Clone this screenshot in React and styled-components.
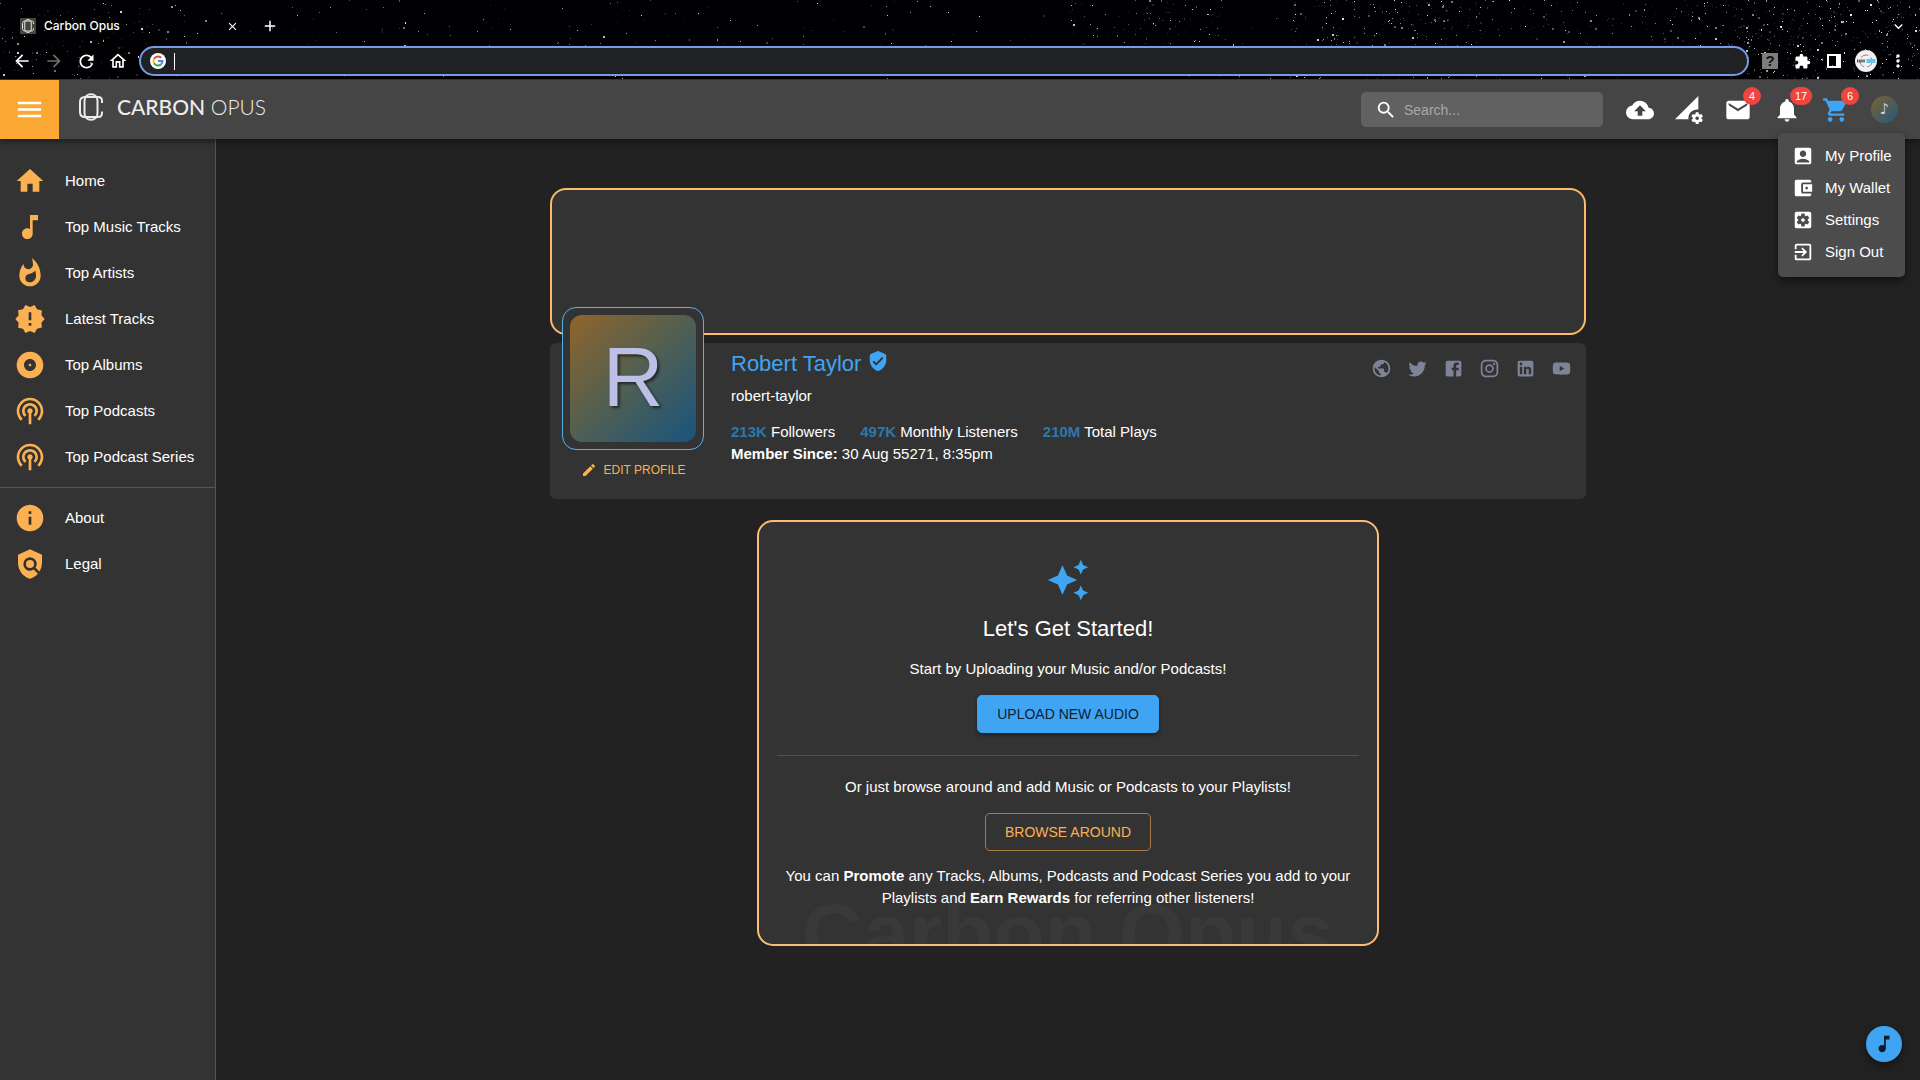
import React from "react";
import styled, { createGlobalStyle } from "styled-components";
import {
  MdAccountBalanceWallet,
  MdAccountBox,
  MdAdd,
  MdAlbum,
  MdArrowBack,
  MdArrowForward,
  MdAutoAwesome,
  MdBackup,
  MdClose,
  MdEdit,
  MdEmail,
  MdExitToApp,
  MdExtension,
  MdHome,
  MdInfo,
  MdKeyboardArrowDown,
  MdMenu,
  MdMoreVert,
  MdMusicNote,
  MdNewReleases,
  MdNotifications,
  MdOutlineHome,
  MdPermDataSetting,
  MdPodcasts,
  MdPolicy,
  MdPublic,
  MdRefresh,
  MdSearch,
  MdSettingsApplications,
  MdShoppingCart,
  MdWhatshot,
} from "react-icons/md";

const blue = "#3fa5f2";
const orange = "#fbb052";
const panel = "#333333";

const GlobalStyle = createGlobalStyle`
  * {
    box-sizing: border-box;
  }
  body {
    margin: 0;
    background: #222222;
    color: #fff;
    font-family: "Liberation Sans", Arial, sans-serif;
    font-size: 15px;
    line-height: 22px;
  }
  button {
    font: inherit;
    color: inherit;
    background: none;
    border: none;
    padding: 0;
    cursor: pointer;
  }
  a {
    color: inherit;
    text-decoration: none;
  }
  h1, h2, p, ul {
    margin: 0;
    padding: 0;
    font-weight: 400;
  }
  ul {
    list-style: none;
  }
  svg {
    display: block;
    flex: none;
  }
`;

const Page = styled.div`
  min-height: 100vh;
  display: flex;
  flex-direction: column;
`;

/* browser bar */

const Browser = styled.div`
  position: relative;
  height: 80px;
  background: #010103;
  border-bottom: 1px solid #3a3a3a;
`;

const Sky = styled.svg`
  position: absolute;
  left: 0;
  top: 0;
  width: 100%;
  height: 79px;
`;

const TabStrip = styled.div`
  position: relative;
  height: 46px;
  padding: 6px 14px 0 20px;
  display: flex;
  align-items: center;
  font-family: Inter, Roboto, sans-serif;
  font-size: 12px;
  font-weight: 500;
`;

const Favicon = styled.span`
  padding: 0 2px;
  background: #45443f;
  color: #e8e8e0;
`;

const TabTitle = styled.span`
  width: 188px;
  padding-left: 8px;
`;

const TabButton = styled.button`
  width: ${(props) => props.$width}px;
  height: 24px;
  display: flex;
  align-items: center;
  justify-content: center;
`;

const Spacer = styled.div`
  flex: 1;
`;

const Toolbar = styled.div`
  position: relative;
  height: 30px;
  padding: 0 6px;
  display: flex;
  align-items: center;
`;

const ToolButton = styled.button`
  width: 32px;
  height: 30px;
  display: flex;
  align-items: center;
  justify-content: center;
  color: ${(props) => (props.$dim ? "#707070" : "#fff")};
`;

const Omnibox = styled.div`
  flex: 1;
  height: 30px;
  margin: 0 5px;
  padding-left: 9px;
  border: 2px solid #779be7;
  border-radius: 15px;
  background: #202124;
  display: flex;
  align-items: center;
  gap: 8px;
`;

const Address = styled.input`
  flex: 1;
  height: 17px;
  padding: 0;
  border: none;
  border-left: 1px solid #fff;
  outline: none;
  background: none;
  color: #fff;
`;

const HelpBox = styled.span`
  width: 16px;
  height: 16px;
  background: #7d7d7d;
  color: #111;
  font-size: 15px;
  line-height: 16px;
  font-weight: 700;
`;

/* app header */

const Header = styled.header`
  position: relative;
  z-index: 2;
  height: 59px;
  padding-right: 22px;
  display: flex;
  align-items: center;
  background: #454545;
  box-shadow: 0 2px 6px rgba(0, 0, 0, 0.5);
`;

const MenuToggle = styled.button`
  width: 59px;
  height: 59px;
  display: flex;
  align-items: center;
  justify-content: center;
  background: #fba834;
`;

const Brand = styled.a`
  margin-left: 20px;
  padding-bottom: 6px;
  display: flex;
  align-items: center;
  gap: 14px;
  color: #ececec;
  font-family: Lato, sans-serif;
  font-size: 21px;
  line-height: 28px;
  font-weight: 300;
`;

const BrandStrong = styled.span`
  font-weight: 500;
`;

const Search = styled.label`
  width: 242px;
  height: 35px;
  margin-right: 23px;
  padding-left: 14px;
  display: flex;
  align-items: center;
  gap: 7px;
  border-radius: 5px;
  background: #616161;
`;

const SearchInput = styled.input`
  flex: 1;
  min-width: 0;
  padding: 0;
  border: none;
  outline: none;
  background: none;
  color: #fff;
  font: inherit;
  font-size: 14px;
  &::placeholder {
    color: #a8a8a8;
    opacity: 1;
  }
`;

const Actions = styled.nav`
  display: flex;
  align-items: center;
  gap: 21px;
`;

const IconButton = styled.button`
  position: relative;
  color: ${(props) => props.$color || "#fff"};
`;

const Badge = styled.span`
  position: absolute;
  top: 0;
  right: 0;
  transform: translate(50%, -50%);
  min-width: 18px;
  height: 18px;
  padding: 0 5px;
  border-radius: 9px;
  background: #f0443f;
  color: #fff;
  font-size: 11px;
  line-height: 18px;
  text-align: center;
`;

const SmallAvatar = styled.button`
  width: 27px;
  height: 27px;
  border-radius: 50%;
  background: linear-gradient(135deg, #80602f, #215a7c);
  color: #d3d3ee;
  font-family: "DejaVu Sans", sans-serif;
  font-size: 15px;
  line-height: 27px;
`;

const AccountMenu = styled.ul`
  position: absolute;
  top: 53px;
  right: 15px;
  width: 127px;
  padding: 7px 0 9px;
  border-radius: 5px;
  background: #4c4c4c;
  box-shadow: 0 4px 10px rgba(0, 0, 0, 0.5);
`;

const AccountLink = styled.a`
  height: 32px;
  padding-left: 14px;
  display: flex;
  align-items: center;
  gap: 11px;
  white-space: nowrap;
`;

/* body */

const Body = styled.div`
  flex: 1;
  display: flex;
`;

const Sidebar = styled.nav`
  width: 216px;
  padding-top: 19px;
  border-right: 1px solid #555;
  background: ${panel};
`;

const SideList = styled.ul`
  & + & {
    margin-top: 7px;
    padding-top: 7px;
    border-top: 1px solid #555;
  }
`;

const SideLink = styled.a`
  height: 46px;
  padding-left: 14px;
  display: flex;
  align-items: center;
  gap: 19px;
  svg {
    color: ${orange};
  }
`;

const Main = styled.main`
  flex: 1;
  padding: 49px 24px;
  display: flex;
  flex-direction: column;
  align-items: center;
`;

const Content = styled.div`
  width: 100%;
  max-width: 1036px;
`;

const Banner = styled.div`
  height: 147px;
  border: 2px solid #fbbb6a;
  border-radius: 16px;
  background: ${panel};
`;

const Profile = styled.section`
  min-height: 156px;
  margin-top: 8px;
  padding: 0 14px 16px 12px;
  display: flex;
  align-items: flex-start;
  border-radius: 6px;
  background: ${panel};
`;

const AvatarColumn = styled.div`
  width: 142px;
  margin-top: -36px;
  display: flex;
  flex-direction: column;
  align-items: center;
  gap: 9px;
`;

const AvatarFrame = styled.div`
  width: 142px;
  height: 143px;
  padding: 7px;
  border: 1px solid #55b2ea;
  border-radius: 14px;
  background: ${panel};
`;

const Avatar = styled.div`
  height: 100%;
  padding-bottom: 4px;
  border-radius: 12px;
  display: flex;
  align-items: center;
  justify-content: center;
  background: linear-gradient(135deg, #90642c, #56604e 45%, #18547f);
  color: #bcbfe6;
  font-size: 84px;
  line-height: 84px;
  text-shadow: 2px 2px 3px rgba(0, 0, 0, 0.6);
`;

const EditButton = styled.button`
  display: flex;
  align-items: center;
  gap: 7px;
  color: ${orange};
  font-size: 12px;
`;

const Details = styled.div`
  flex: 1;
  padding: 7px 0 0 27px;
`;

const Name = styled.h1`
  display: flex;
  align-items: flex-start;
  gap: 6px;
  color: ${blue};
  font-size: 22px;
  line-height: 28px;
`;

const Handle = styled.p`
  margin: 7px 0 14px;
`;

const Stats = styled.ul`
  display: flex;
  gap: 25px;
`;

const Count = styled.strong`
  color: #2b78ae;
`;

const Socials = styled.ul`
  padding-top: 15px;
  display: flex;
  gap: 15px;
  color: #7f8398;
`;

const StartCard = styled.section`
  position: relative;
  width: 60%;
  margin: 21px auto 0;
  padding: 36px 18px 35px;
  overflow: hidden;
  display: flex;
  flex-direction: column;
  align-items: center;
  text-align: center;
  border: 2px solid #fbbd75;
  border-radius: 16px;
  background: ${panel};
`;

const Watermark = styled.span`
  position: absolute;
  left: 0;
  right: 0;
  bottom: -31px;
  color: #393939;
  font-size: 84px;
  line-height: 84px;
  font-weight: 700;
  white-space: nowrap;
`;

const StartTitle = styled.h2`
  margin: 13px 0 15px;
  font-size: 22px;
  line-height: 28px;
`;

const Text = styled.p`
  position: relative;
`;

const Button = styled.button`
  height: 38px;
  margin: 15px 0 14px;
  padding: 0 19px;
  border-radius: 5px;
  border: 1px solid ${(props) => (props.$filled ? blue : "#a97a42")};
  background: ${(props) => (props.$filled ? blue : "transparent")};
  color: ${(props) => (props.$filled ? "#0d2234" : orange)};
  font-size: 14px;
  box-shadow: ${(props) =>
    props.$filled ? "0 2px 4px rgba(0, 0, 0, 0.4)" : "none"};
`;

const Divider = styled.hr`
  width: 100%;
  margin: 8px 0 20px;
  border: none;
  border-top: 1px solid #505050;
`;

const PlayerButton = styled.button`
  position: fixed;
  right: 18px;
  bottom: 18px;
  width: 36px;
  height: 36px;
  border-radius: 50%;
  display: flex;
  align-items: center;
  justify-content: center;
  background: ${blue};
  color: #0d1b28;
  box-shadow: 0 3px 8px rgba(0, 0, 0, 0.5);
`;

// [from x, to x, number of stars]
const skyParts = [
  [0, 200, 150],
  [200, 480, 60],
  [480, 960, 130],
  [960, 1070, 12],
  [1070, 1230, 170],
  [1230, 1290, 14],
  [1290, 1480, 360],
  [1480, 1720, 250],
  [1720, 1920, 450],
];

const makeStars = () => {
  let seed = 71;
  const random = () => {
    seed = (seed * 16807) % 2147483647;
    return seed / 2147483647;
  };
  const stars = [];
  skyParts.forEach(([from, to, count]) => {
    for (let i = 0; i < count; i++) {
      const size = random();
      stars.push({
        x: Math.floor(from + random() * (to - from)),
        y: Math.floor(random() * 79),
        w: size > 0.9 ? 2 : 1,
        h: size > 0.82 ? 2 : 1,
        o: Math.pow(random(), 2) * 0.9 + 0.1,
      });
    }
  });
  return stars;
};

const stars = makeStars();

const mainLinks = [
  { icon: MdHome, label: "Home" },
  { icon: MdMusicNote, label: "Top Music Tracks" },
  { icon: MdWhatshot, label: "Top Artists" },
  { icon: MdNewReleases, label: "Latest Tracks" },
  { icon: MdAlbum, label: "Top Albums" },
  { icon: MdPodcasts, label: "Top Podcasts" },
  { icon: MdPodcasts, label: "Top Podcast Series" },
];

const infoLinks = [
  { icon: MdInfo, label: "About" },
  { icon: MdPolicy, label: "Legal" },
];

const accountLinks = [
  { icon: MdAccountBox, label: "My Profile" },
  { icon: MdAccountBalanceWallet, label: "My Wallet" },
  { icon: MdSettingsApplications, label: "Settings" },
  { icon: MdExitToApp, label: "Sign Out" },
];

const stats = [
  { count: "213K", label: "Followers" },
  { count: "497K", label: "Monthly Listeners" },
  { count: "210M", label: "Total Plays" },
];

const socialPaths = [
  {
    name: "Twitter",
    d: "M22.46 6c-.77.35-1.6.58-2.46.69.88-.53 1.56-1.37 1.88-2.38-.83.5-1.75.85-2.72 1.05C18.37 4.5 17.26 4 16 4c-2.35 0-4.27 1.92-4.27 4.29 0 .34.04.67.11.98C8.28 9.09 5.11 7.38 3 4.79c-.37.63-.58 1.37-.58 2.15 0 1.49.75 2.81 1.91 3.56-.71 0-1.37-.2-1.95-.5v.03c0 2.08 1.48 3.82 3.44 4.21a4.22 4.22 0 0 1-1.93.07 4.28 4.28 0 0 0 4 2.98 8.521 8.521 0 0 1-5.33 1.84c-.34 0-.68-.02-1.02-.06C3.44 20.29 5.7 21 8.12 21 16 21 20.33 14.46 20.33 8.79c0-.19 0-.37-.01-.56.84-.6 1.56-1.36 2.14-2.23z",
  },
  {
    name: "Facebook",
    d: "M5 3h14a2 2 0 0 1 2 2v14a2 2 0 0 1-2 2H5a2 2 0 0 1-2-2V5a2 2 0 0 1 2-2m13 2h-2.5A3.5 3.5 0 0 0 12 8.5V11h-2v3h2v7h3v-7h3v-3h-3V9a1 1 0 0 1 1-1h2V5z",
  },
  {
    name: "Instagram",
    d: "M7.8 2h8.4C19.4 2 22 4.6 22 7.8v8.4a5.8 5.8 0 0 1-5.8 5.8H7.8C4.6 22 2 19.4 2 16.2V7.8A5.8 5.8 0 0 1 7.8 2m-.2 2A3.6 3.6 0 0 0 4 7.6v8.8C4 18.39 5.61 20 7.6 20h8.8a3.6 3.6 0 0 0 3.6-3.6V7.6C20 5.61 18.39 4 16.4 4H7.6m9.65 1.5a1.25 1.25 0 0 1 1.25 1.25A1.25 1.25 0 0 1 17.25 8 1.25 1.25 0 0 1 16 6.75a1.25 1.25 0 0 1 1.25-1.25M12 7a5 5 0 0 1 5 5 5 5 0 0 1-5 5 5 5 0 0 1-5-5 5 5 0 0 1 5-5m0 2a3 3 0 0 0-3 3 3 3 0 0 0 3 3 3 3 0 0 0 3-3 3 3 0 0 0-3-3z",
  },
  {
    name: "LinkedIn",
    d: "M19 3a2 2 0 0 1 2 2v14a2 2 0 0 1-2 2H5a2 2 0 0 1-2-2V5a2 2 0 0 1 2-2h14m-.5 15.5v-5.3a3.26 3.26 0 0 0-3.26-3.26c-.85 0-1.84.52-2.32 1.3v-1.11h-2.79v8.37h2.79v-4.93c0-.77.62-1.4 1.39-1.4a1.4 1.4 0 0 1 1.4 1.4v4.93h2.79M6.88 8.56a1.68 1.68 0 0 0 1.68-1.68c0-.93-.75-1.69-1.68-1.69a1.69 1.69 0 0 0-1.69 1.69c0 .93.76 1.68 1.69 1.68m1.39 9.94v-8.37H5.5v8.37h2.77z",
  },
  {
    name: "YouTube",
    d: "M10 15l5.19-3L10 9v6m11.56-7.83c.13.47.22 1.1.28 1.9.07.8.1 1.49.1 2.09L22 12c0 2.19-.16 3.8-.44 4.83-.25.9-.83 1.48-1.73 1.73-.47.13-1.33.22-2.65.28-1.3.07-2.49.1-3.59.1L12 19c-4.19 0-6.8-.16-7.83-.44-.9-.25-1.48-.83-1.73-1.73-.13-.47-.22-1.1-.28-1.9-.07-.8-.1-1.49-.1-2.09L2 12c0-2.19.16-3.8.44-4.83.25-.9.83-1.48 1.73-1.73.47-.13 1.33-.22 2.65-.28 1.3-.07 2.49-.1 3.59-.1L12 5c4.19 0 6.8.16 7.83.44.9.25 1.48.83 1.73 1.73z",
  },
];

function LogoMark({ width, height, stroke }) {
  return (
    <svg
      width={width}
      height={height}
      viewBox="0 0 24 28"
      fill="none"
      stroke="currentColor"
      strokeWidth={stroke}
    >
      <path d="M18.500 8v12c0 4-2.500 6.800-6.500 6.800S5.500 24 5.500 20V8c0-4 2.500-6.800 6.500-6.800S18.500 4 18.500 8z" />
      <path d="M23 10V8c0-2.500-1.500-4-4-4H6C3 4 1 6 1 9v10c0 3 2 5 5 5h13c2.500 0 4-1.500 4-4v-1.500" />
    </svg>
  );
}

function GoogleMark() {
  return (
    <svg width="16" height="16" viewBox="0 0 32 32" fill="none">
      <circle cx="16" cy="16" r="16" fill="#fff" />
      <g strokeWidth="4">
        <path d="M22.500 9.600A9 9 0 0 0 8.200 11.500" stroke="#e2483d" />
        <path d="M8.200 11.500a9 9 0 0 0 0 9" stroke="#f6bb1c" />
        <path d="M8.200 20.500a9 9 0 0 0 13.600 2.400" stroke="#37a656" />
        <path d="M21.800 22.900A9 9 0 0 0 25 16h-9" stroke="#4a86ee" />
      </g>
    </svg>
  );
}

function AccountMark() {
  return (
    <svg width="22" height="22" viewBox="0 0 22 22" fill="none">
      <circle cx="11" cy="11" r="11" fill="#f2f2f2" />
      <circle cx="11" cy="11" r="6" stroke="#888" strokeDasharray="8 3" />
      <path
        d="M2 11h8"
        stroke="#555"
        strokeWidth="3"
        strokeDasharray="1.500 .6"
      />
      <path d="M11.500 9h9v4h-9z" fill="#62c5ea" />
    </svg>
  );
}

function VerifiedMark() {
  return (
    <svg width="22" height="22" viewBox="0 0 24 24" fill="currentColor">
      <path d="M11.190 1.360l-7 3.110C3.470 4.790 3 5.510 3 6.300V11c0 5.550 3.840 10.740 9 12 5.160-1.260 9-6.450 9-12V6.300c0-.79-.47-1.510-1.190-1.830l-7-3.110c-.51-.23-1.110-.23-1.620 0zm-1.900 14.930L6.700 13.700a1 1 0 0 1 0-1.410c.39-.39 1.020-.39 1.410 0L10 14.170l5.880-5.880c.39-.39 1.020-.39 1.410 0 .39.39.39 1.020 0 1.410l-6.590 6.590c-.38.39-1.020.39-1.410 0z" />
    </svg>
  );
}

function BrowserBar() {
  return (
    <Browser>
      <Sky viewBox="0 0 1920 79" preserveAspectRatio="xMinYMin slice">
        {stars.map((star, index) => (
          <rect
            key={index}
            x={star.x}
            y={star.y}
            width={star.w}
            height={star.h}
            fill="#e8ecff"
            opacity={star.o}
          />
        ))}
      </Sky>
      <TabStrip>
        <Favicon>
          <LogoMark width={12} height={16} stroke={2} />
        </Favicon>
        <TabTitle>Carbon Opus</TabTitle>
        <TabButton $width={16} aria-label="Close tab">
          <MdClose size={13} />
        </TabButton>
        <TabButton $width={60} aria-label="New tab">
          <MdAdd size={18} />
        </TabButton>
        <Spacer />
        <TabButton $width={16} aria-label="Search tabs">
          <MdKeyboardArrowDown size={17} />
        </TabButton>
      </TabStrip>
      <Toolbar>
        <ToolButton aria-label="Back">
          <MdArrowBack size={20} />
        </ToolButton>
        <ToolButton $dim aria-label="Forward">
          <MdArrowForward size={20} />
        </ToolButton>
        <ToolButton aria-label="Reload">
          <MdRefresh size={21} />
        </ToolButton>
        <ToolButton aria-label="Home page">
          <MdOutlineHome size={20} />
        </ToolButton>
        <Omnibox>
          <GoogleMark />
          <Address aria-label="Address" />
        </Omnibox>
        <ToolButton aria-label="Help">
          <HelpBox>?</HelpBox>
        </ToolButton>
        <ToolButton aria-label="Extensions">
          <MdExtension size={17} />
        </ToolButton>
        <ToolButton aria-label="Side panel">
          <svg width="14" height="14" viewBox="0 0 14 14">
            <path d="M0 0h14v14H0zM2 2v10h7V2z" fill="#fff" fillRule="evenodd" />
          </svg>
        </ToolButton>
        <ToolButton aria-label="Account">
          <AccountMark />
        </ToolButton>
        <ToolButton aria-label="More">
          <MdMoreVert size={20} />
        </ToolButton>
      </Toolbar>
    </Browser>
  );
}

function AppHeader() {
  return (
    <Header>
      <MenuToggle aria-label="Menu">
        <MdMenu size={31} />
      </MenuToggle>
      <Brand href="#">
        <LogoMark width={24} height={28} stroke={2} />
        <span>
          <BrandStrong>CARBON</BrandStrong> OPUS
        </span>
      </Brand>
      <Spacer />
      <Search>
        <MdSearch size={22} />
        <SearchInput type="text" aria-label="Search" placeholder="Search..." />
      </Search>
      <Actions>
        <IconButton aria-label="Upload">
          <MdBackup size={28} />
        </IconButton>
        <IconButton aria-label="Data settings">
          <MdPermDataSetting size={28} />
        </IconButton>
        <IconButton aria-label="Messages">
          <MdEmail size={28} />
          <Badge>4</Badge>
        </IconButton>
        <IconButton aria-label="Notifications">
          <MdNotifications size={28} />
          <Badge>17</Badge>
        </IconButton>
        <IconButton $color={blue} aria-label="Cart">
          <MdShoppingCart size={28} />
          <Badge>6</Badge>
        </IconButton>
        <SmallAvatar aria-label="Account menu">♪</SmallAvatar>
      </Actions>
      <AccountMenu>
        {accountLinks.map(({ icon: Icon, label }) => (
          <li key={label}>
            <AccountLink href="#">
              <Icon size={22} />
              {label}
            </AccountLink>
          </li>
        ))}
      </AccountMenu>
    </Header>
  );
}

function SideLinks({ links }) {
  return (
    <SideList>
      {links.map(({ icon: Icon, label }) => (
        <li key={label}>
          <SideLink href="#">
            <Icon size={32} />
            {label}
          </SideLink>
        </li>
      ))}
    </SideList>
  );
}

function ProfileCard() {
  return (
    <Profile>
      <AvatarColumn>
        <AvatarFrame>
          <Avatar>R</Avatar>
        </AvatarFrame>
        <EditButton>
          <MdEdit size={16} />
          EDIT PROFILE
        </EditButton>
      </AvatarColumn>
      <Details>
        <Name>
          Robert Taylor
          <VerifiedMark />
        </Name>
        <Handle>robert-taylor</Handle>
        <Stats>
          {stats.map(({ count, label }) => (
            <li key={label}>
              <Count>{count}</Count> {label}
            </li>
          ))}
        </Stats>
        <p>
          <strong>Member Since:</strong> 30 Aug 55271, 8:35pm
        </p>
      </Details>
      <Socials>
        <li>
          <a href="#" aria-label="Website">
            <MdPublic size={21} />
          </a>
        </li>
        {socialPaths.map(({ name, d }) => (
          <li key={name}>
            <a href="#" aria-label={name}>
              <svg width="21" height="21" viewBox="0 0 24 24">
                <path d={d} fill="currentColor" />
              </svg>
            </a>
          </li>
        ))}
      </Socials>
    </Profile>
  );
}

function GetStarted() {
  return (
    <StartCard>
      <Watermark aria-hidden="true">Carbon Opus</Watermark>
      <MdAutoAwesome size={44} color={blue} />
      <StartTitle>Let's Get Started!</StartTitle>
      <Text>Start by Uploading your Music and/or Podcasts!</Text>
      <Button $filled>UPLOAD NEW AUDIO</Button>
      <Divider />
      <Text>Or just browse around and add Music or Podcasts to your Playlists!</Text>
      <Button>BROWSE AROUND</Button>
      <Text>
        You can <strong>Promote</strong> any Tracks, Albums, Podcasts and Podcast
        Series you add to your Playlists and <strong>Earn Rewards</strong> for
        referring other listeners!
      </Text>
    </StartCard>
  );
}

function App() {
  return (
    <Page>
      <GlobalStyle />
      <BrowserBar />
      <AppHeader />
      <Body>
        <Sidebar>
          <SideLinks links={mainLinks} />
          <SideLinks links={infoLinks} />
        </Sidebar>
        <Main>
          <Content>
            <Banner />
            <ProfileCard />
            <GetStarted />
          </Content>
        </Main>
      </Body>
      <PlayerButton aria-label="Player">
        <MdMusicNote size={22} />
      </PlayerButton>
    </Page>
  );
}

export default App;
